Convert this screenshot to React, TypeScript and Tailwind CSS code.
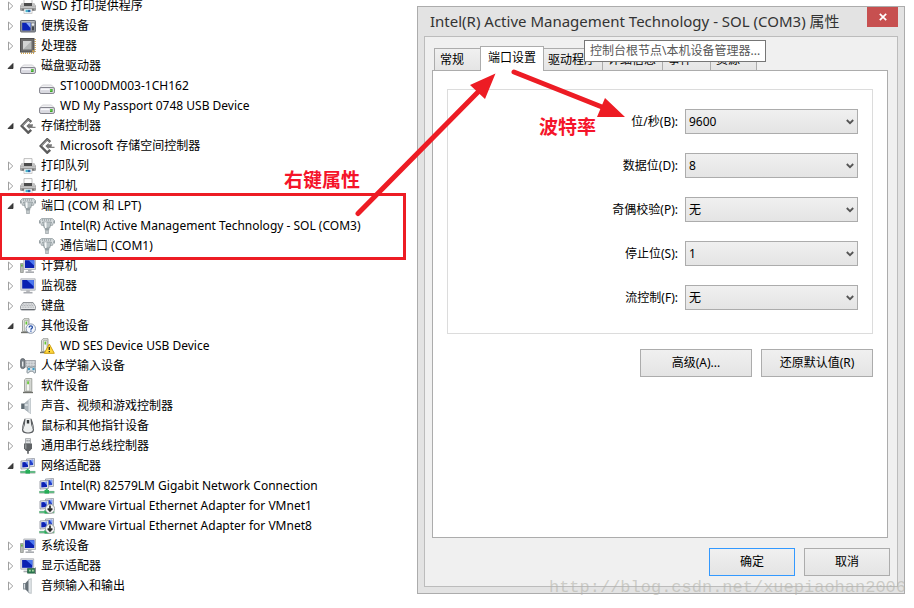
import { ReactNode } from "react";

type IconName =
  | "printer" | "portable" | "cpu" | "disk" | "storage" | "port" | "computer" | "monitor"
  | "keyboard" | "unknown" | "warning" | "hid" | "software" | "sound" | "mouse" | "usb"
  | "network" | "networkDown" | "display" | "speaker";

interface DeviceNode {
  label: string;
  icon: IconName;
  children?: DeviceNode[];
}

interface PortSetting {
  id: string;
  label: string;
  options: string[];
}

const devices: DeviceNode[] = [
  { label: "WSD 打印提供程序", icon: "printer" },
  { label: "便携设备", icon: "portable" },
  { label: "处理器", icon: "cpu" },
  {
    label: "磁盘驱动器", icon: "disk", children: [
      { label: "ST1000DM003-1CH162", icon: "disk" },
      { label: "WD My Passport 0748 USB Device", icon: "disk" },
    ],
  },
  { label: "存储控制器", icon: "storage", children: [{ label: "Microsoft 存储空间控制器", icon: "storage" }] },
  { label: "打印队列", icon: "printer" },
  { label: "打印机", icon: "printer" },
  {
    label: "端口 (COM 和 LPT)", icon: "port", children: [
      { label: "Intel(R) Active Management Technology - SOL (COM3)", icon: "port" },
      { label: "通信端口 (COM1)", icon: "port" },
    ],
  },
  { label: "计算机", icon: "computer" },
  { label: "监视器", icon: "monitor" },
  { label: "键盘", icon: "keyboard" },
  { label: "其他设备", icon: "unknown", children: [{ label: "WD SES Device USB Device", icon: "warning" }] },
  { label: "人体学输入设备", icon: "hid" },
  { label: "软件设备", icon: "software" },
  { label: "声音、视频和游戏控制器", icon: "sound" },
  { label: "鼠标和其他指针设备", icon: "mouse" },
  { label: "通用串行总线控制器", icon: "usb" },
  {
    label: "网络适配器", icon: "network", children: [
      { label: "Intel(R) 82579LM Gigabit Network Connection", icon: "network" },
      { label: "VMware Virtual Ethernet Adapter for VMnet1", icon: "networkDown" },
      { label: "VMware Virtual Ethernet Adapter for VMnet8", icon: "networkDown" },
    ],
  },
  { label: "系统设备", icon: "computer" },
  { label: "显示适配器", icon: "display" },
  { label: "音频输入和输出", icon: "speaker" },
];

const settings: PortSetting[] = [
  { id: "baud", label: "位/秒(B):", options: ["9600"] },
  { id: "data", label: "数据位(D):", options: ["8"] },
  { id: "parity", label: "奇偶校验(P):", options: ["无"] },
  { id: "stop", label: "停止位(S):", options: ["1"] },
  { id: "flow", label: "流控制(F):", options: ["无"] },
];

const tower = (
  <>
    <path d="M2.5 2.5 4 .7h5v12.8H2.500z" fill="#e0e2de" stroke="#8d908a" strokeWidth=".8" />
    <path d="M4.500 2.500h3.500v10.500H4.500z" fill="#f5f7f3" stroke="#a4a7a0" strokeWidth=".7" />
    <path d="M5.500 3.500h1.600v3H5.500z" fill="#63c531" />
    <path d="M1 14.500h9" stroke="#6f716c" strokeWidth="1.400" />
  </>
);

const networkBase = (
  <>
    <path d="M6.500 1 14.500.4v8L6.500 9z" fill="#e3e5ea" stroke="#959aa5" strokeWidth=".8" />
    <path d="M8 2.200 13.200 1.800v5.200L8 7.400z" fill="#2240cc" />
    <path d="M10.500 2 13.200 1.800v4z" fill="#7fa0f5" />
    <path d="M1 3 9.300 2.300v8.200L1 11z" fill="#eceef2" stroke="#8c9099" strokeWidth=".8" />
    <path d="M2.300 4.200 8 3.700v5.300l-5.700.4z" fill="#0d22b4" />
    <path d="M5 4 8 3.700v3.500z" fill="#6f95f4" />
    <path d="M.3 14.200h15" stroke="#9ba69f" strokeWidth="2.600" />
    <path d="M.3 14h15" stroke="#4cc27a" strokeWidth="1.400" />
    <path d="M5.500 12h4.500v3.600H5.500z" fill="#25ad57" />
    <path d="M6.800 10.800h1.900v2H6.800z" fill="#3db56a" />
  </>
);

const icons: Record<IconName, ReactNode> = {
  printer: (
    <>
      <path d="M4 .6h8V6H4z" fill="#fdfdfd" stroke="#b0b0b0" strokeWidth=".8" />
      <path d="M2 5h12l2 3v3.500q0 1.500-1.500 1.500h-13Q0 13 0 11.500V8z" fill="#9c9c9c" />
      <path d="M2 5h2v3H.4zM12 5h2l1.600 3H12z" fill="#c4c4c4" />
      <path d="M4 5h8v3H4z" fill="#4c4c4c" />
      <path d="M.4 8.300h15.200v1.700H.4z" fill="#c6c6c6" />
      <path d="M2.500 10.800h11v1.700h-11z" fill="#555" />
      <path d="M4 11h8v4.600H4z" fill="#fff" stroke="#b4b4b4" strokeWidth=".7" />
      <path d="M5.500 11.800H8v2.400H5.500z" fill="#4bb0c8" />
      <path d="M8 11.800h2.500v2.400H8z" fill="#2b6aab" />
    </>
  ),
  portable: (
    <>
      <rect x=".5" y="2.500" width="15" height="11.500" rx=".8" fill="#8b9097" stroke="#666b73" />
      <path d="M1.500 3.400h13v.8h-13z" fill="#d3d6da" />
      <path d="M2.200 4.800h8.300v7.700H2.200z" fill="#0b24b9" />
      <path d="M6 4.800h4.500v5.200z" fill="#8aaaf7" />
      <circle cx="13" cy="6.500" r="1.200" fill="#eceeef" />
      <path d="M12.200 8.500h1.600v3.700h-1.600z" fill="#30343b" />
    </>
  ),
  cpu: (
    <>
      <path d="M1 15.200h14M15.200 1v14" stroke="#d6a84e" strokeWidth="1.400" strokeDasharray="1 1" />
      <path d="M0 0h14.500v14.500H0z" fill="#505050" />
      <path d="M1 1h12.500v12.500H1z" fill="#6b6b6b" />
      <path d="M3 3h8.500v8.500H3z" fill="#b3b6b5" />
      <path d="M3 3h8.500L3 11.500z" fill="#d2d4d3" />
      <path d="M12.200 12.200H14V14h-1.800z" fill="#d3a34a" />
    </>
  ),
  disk: (
    <>
      <path d="M3.500 7h9l3 3H.5z" fill="#f2f2f4" stroke="#c8c8cd" strokeWidth=".8" />
      <rect x=".5" y="9.500" width="15" height="6" rx="1.600" fill="#d9d9e0" stroke="#85858e" />
      <path d="M2 11.300h8.500" stroke="#f7f7fa" strokeWidth="1.600" />
      <path d="M11 11h2.600v3H11z" fill="#3fa62c" />
      <path d="M11.400 11.300h1v1.700h-1z" fill="#8bdf70" />
    </>
  ),
  storage: (
    <>
      <path d="M11.300 4 8.200 1.200 1.600 8l6.600 6.700 3-2.900" fill="none" stroke="#5c5c5c" strokeWidth="2.400" />
      <path d="M10.600 3.800 8.200 1.600 2.200 7.800" fill="none" stroke="#999" strokeWidth="1" />
      <path d="M6.400 8 9.600 4.900v2h3V9.200h-3v2z" fill="#6e6e6e" />
      <path d="M8 6.800h5M8 9.300h7.500" stroke="#808080" strokeWidth="1.300" />
    </>
  ),
  port: (
    <>
      <path d="M.8 2.300 2.500.6h11l1.700 1.700-1.700 5h-11z" fill="#dce1e3" stroke="#8b9599" strokeWidth=".8" />
      <path d="M2.800 2h10.400" stroke="#748086" strokeWidth="1" strokeDasharray="1.200 .8" />
      <path d="M.5 2.500v3M15.500 2.500v3" stroke="#98a1a5" strokeWidth="1" />
      <path d="M3.500 4h9l-1.800 6H5.300z" fill="#b9c2c5" stroke="#879094" strokeWidth=".7" />
      <path d="M5.500 4.300h2V10h-1.500z" fill="#f5f7f8" />
      <path d="M5.800 10h4.400v2.300H5.800z" fill="#98a2a6" />
      <path d="M6.600 12.200h2.800v3.500H6.600z" fill="#c7ced0" stroke="#879094" strokeWidth=".6" />
    </>
  ),
  computer: (
    <>
      <path d="M.5 5.500h2.800v9H.5z" fill="#b8bcb7" stroke="#858a85" strokeWidth=".7" />
      <path d="M1.200 6.500h1.400v2H1.200z" fill="#51b92d" />
      <path d="M3.800 1h11.700v10.500H3.800z" fill="#dcdee2" stroke="#a7abb1" strokeWidth=".8" />
      <path d="M5 2.200h9.300v7.800H5z" fill="#0a21b2" />
      <path d="M8.500 2.200h5.800v5.600z" fill="#4c78ef" />
      <path d="M8 11.500h3.500v2H8z" fill="#b0b3b7" />
      <path d="M5.500 14.200H14" stroke="#a8abb0" strokeWidth="1.600" />
    </>
  ),
  monitor: (
    <>
      <path d="M.8.800h14.400v11.400H.8z" fill="#dcdee2" stroke="#a7abb1" strokeWidth=".8" />
      <path d="M2.200 2h11.600v8.600H2.200z" fill="#0a21b2" />
      <path d="M6.800 2h7v6.400z" fill="#4c78ef" />
      <path d="M6.200 12.300h3.600v1.600H6.200z" fill="#b0b3b7" />
      <path d="M3.500 14.700h9" stroke="#a8abb0" strokeWidth="1.600" />
    </>
  ),
  keyboard: (
    <>
      <path d="M3 4.500h10l2.600 4.200v1.800q0 1.500-1.500 1.500H1.900Q.4 12 .4 10.500V8.700z" fill="#e3e5e7" stroke="#868a8f" strokeWidth=".9" />
      <path d="M3 6h10M2.300 7.600h11.400M1.700 9.200h12.600" stroke="#979ba0" strokeWidth=".8" strokeDasharray="1 .6" />
      <path d="M1.200 11.500h13.600" stroke="#63676d" strokeWidth="1" />
    </>
  ),
  unknown: (
    <>
      {tower}
      <circle cx="10.800" cy="10.600" r="4.700" fill="#f4f7fc" stroke="#8a98b0" />
      <path d="M9.200 9.500c0-2.300 3.400-2.100 3.200-.1-.1 1-1.500 1.200-1.500 2.300M10.900 12.600v1.100" fill="none" stroke="#254ea8" strokeWidth="1.300" />
    </>
  ),
  warning: (
    <>
      {tower}
      <path d="m10.300 6 5 9.300h-10z" fill="#ffd83f" stroke="#cfa012" strokeLinejoin="round" />
      <path d="M10.300 8.900v3M10.300 13v1.300" stroke="#2f2a16" strokeWidth="1.300" />
    </>
  ),
  hid: (
    <>
      <path d="M5 2.500h10.600V9H5z" fill="#dfe2e5" stroke="#8f949a" strokeWidth=".8" />
      <path d="M6 4h9M6 5.600h9M6 7.200h9" stroke="#8f949a" strokeWidth=".7" strokeDasharray="1 .6" />
      <rect x=".6" y=".6" width="4.200" height="10" rx="2" fill="#7a8188" stroke="#555b61" strokeWidth=".8" />
      <path d="M2 3.500h1.400v5H2z" fill="#e6e9eb" />
      <path d="M7.500 9.200c1-.9 1.800-.4 2.500 0h2.300c.8-.4 2-.8 2.800.1l.6 5.200c-1.400 1.500-2.200-.2-2.800-1.300h-3c-.6 1.100-1.800 2.800-3 1.300z" fill="#d9e1e6" stroke="#6c7880" strokeWidth=".8" />
      <circle cx="9" cy="11" r="1.200" fill="#3d9bc5" />
      <circle cx="13.500" cy="11" r="1.200" fill="#3d9bc5" />
    </>
  ),
  software: (
    <>
      <path d="M4.500 1.800 5.800.6h6v12.900H4.500z" fill="#e0e2de" stroke="#8d908a" strokeWidth=".8" />
      <path d="M6.300 2.500h3.500V13H6.300z" fill="#f5f7f3" stroke="#a4a7a0" strokeWidth=".7" />
      <path d="M7.200 3.200h1.700v3H7.200z" fill="#63c531" />
      <path d="M3 14.500h10" stroke="#6f716c" strokeWidth="1.400" />
    </>
  ),
  sound: (
    <>
      <path d="M1.200 5.500H5v5.500H1.200z" fill="#5f6a72" />
      <path d="M4.500 5.500 10.500.5v15L4.500 11z" fill="#b0b9bf" stroke="#929ca3" strokeWidth=".6" />
      <path d="M8.500 2.200 10.500.5v15l-2-1.700z" fill="#dce1e5" />
      <path d="M4.800 6.300h3v1.400h-3z" fill="#e9ecef" />
    </>
  ),
  mouse: (
    <>
      <path d="M4.500.8h7C12.400 3 14 8.500 14 11.500c0 3-2.200 4-6 4s-6-1-6-4C2 8.500 3.600 3 4.500.8z" fill="#5a5d60" />
      <path d="M5.500 1h5l.7 6 1.700 4.600c-.5 2.300-2.200 3-4.900 3s-4.400-.7-4.900-3L4.800 7z" fill="#eef0f0" />
      <path d="M6.800 2h2.400v3.500H6.800z" fill="#35383b" />
      <path d="M3.600 6.500 3 11M12.400 6.500l.6 4.500" stroke="#9da1a4" />
    </>
  ),
  usb: (
    <>
      <path d="M5.500.6h5v5h-5z" fill="#e1e3e5" stroke="#999da0" strokeWidth=".8" />
      <path d="M6.600 2h1v1.500h-1zM8.600 2h1v1.500h-1z" fill="#7b7f82" />
      <path d="M4 5.500h8v5L9.800 13H6.200L4 10.500z" fill="#616467" />
      <path d="M5 6.300h1.500v4.500H5z" fill="#8f9396" />
      <path d="M7.200 12.500h1.600v3.200H7.200z" fill="#55585b" />
    </>
  ),
  network: networkBase,
  networkDown: (
    <>
      {networkBase}
      <circle cx="11" cy="10.800" r="4.600" fill="#f1f3f3" stroke="#9a9e9e" strokeWidth=".9" />
      <path d="M11 7.600v5M8.700 10.500l2.300 2.400 2.300-2.400" fill="none" stroke="#2b2b2b" strokeWidth="1.700" />
    </>
  ),
  display: (
    <>
      <path d="M.8.800h12.900v10.400H.8z" fill="#dcdee2" stroke="#a7abb1" strokeWidth=".8" />
      <path d="M2.100 2h10.300v7.800H2.100z" fill="#0a21b2" />
      <path d="M6 2h6.400v5.600z" fill="#4c78ef" />
      <path d="M3.500 13.500h5" stroke="#a8abb0" strokeWidth="1.600" />
      <path d="M7.500 10.500h7.300v4.700H7.500z" fill="#2c7a50" stroke="#1d5438" strokeWidth=".6" />
      <path d="M9 11.800h1.800v1.800H9zM12 11.800h1.800v1.800H12z" fill="#a5d29b" />
      <path d="M15.500 9.500V16" stroke="#84888c" />
    </>
  ),
  speaker: (
    <>
      <path d="M3 5h3v6.500H3z" fill="#8a949b" />
      <path d="M5.500 5 9.500.8v14.700l-4-4z" fill="#656f76" />
      <path d="M8.500 1.800 11.300.5v15l-2.800-1z" fill="#e1e5e8" stroke="#a5adb2" strokeWidth=".6" />
      <path d="M4 6h1v4.500H4z" fill="#d7dce0" />
    </>
  ),
};

const DeviceIcon = ({ name }: { name: IconName }): ReactNode => (
  <svg viewBox="0 0 16 16" className="h-4 w-4 shrink-0" aria-hidden="true">{icons[name]}</svg>
);

const Expander = ({ open }: { open: boolean }): ReactNode => (
  <svg viewBox="0 0 8 10" className="h-2.5 w-2 shrink-0" aria-hidden="true">
    {open
      ? <path d="M6 2.500v5H1z" fill="#404040" stroke="#262626" strokeWidth=".8" />
      : <path d="M1.500 1v8L5.800 5z" fill="#fff" stroke="#a0a0a0" />}
  </svg>
);

const DeviceTree = (): ReactNode => (
  <ul className="-mt-1 min-w-0 text-xs whitespace-nowrap">
    {devices.map(node => (
      <li key={node.label}>
        <div className="flex h-5 items-center pl-[7px]">
          <Expander open={!!node.children} />
          <span className="flex items-center gap-[5px] pl-[5px]">
            <DeviceIcon name={node.icon} />
            <span>{node.label}</span>
          </span>
        </div>
        {node.children && (
          <ul>
            {node.children.map(child => (
              <li key={child.label} className="flex h-5 items-center gap-[5px] pl-[39px]">
                <DeviceIcon name={child.icon} />
                <span>{child.label}</span>
              </li>
            ))}
          </ul>
        )}
      </li>
    ))}
  </ul>
);

const inactiveTab = "h-[22px] border border-b-0 border-[#acacac] bg-linear-to-b from-[#f0f0f0] to-[#e5e5e5] text-left";

const Tabs = (): ReactNode => (
  <div role="tablist" className="flex items-end pl-0.5 whitespace-nowrap">
    <button type="button" role="tab" aria-selected="false" className={`${inactiveTab} w-[46px] border-r-0 pl-[5px]`}>常规</button>
    <button type="button" role="tab" aria-selected="true" className="relative -mb-px h-[25px] w-16 border border-b-0 border-[#acacac] bg-white pb-0.5 text-center">端口设置</button>
    <button type="button" role="tab" aria-selected="false" className={`${inactiveTab} w-[59px] border-l-0 pl-1`}>驱动程序</button>
    <button type="button" role="tab" aria-selected="false" className={`${inactiveTab} w-[60px] border-l-0 pl-[5px]`}>详细信息</button>
    <button type="button" role="tab" aria-selected="false" className={`${inactiveTab} w-12 border-l-0 pl-[5px]`}>事件</button>
    <button type="button" role="tab" aria-selected="false" className={`${inactiveTab} w-[46px] border-l-0 pl-[5px]`}>资源</button>
  </div>
);

const PushButton = ({ children, className }: { children: ReactNode, className: string }): ReactNode => (
  <button type="button" className={`h-7 border bg-linear-to-b from-[#f0f0f0] to-[#e4e4e4] text-center ${className}`}>
    {children}
  </button>
);

const SettingRow = ({ setting }: { setting: PortSetting }): ReactNode => (
  <div className="flex items-center justify-end gap-[7px]">
    <label htmlFor={setting.id}>{setting.label}</label>
    <div className="relative w-[173px]">
      <select
        id={setting.id}
        className="block h-[25px] w-full appearance-none border border-[#acacac] bg-linear-to-b from-[#f0f0f0] to-[#e4e4e4] pl-[3px]">
        {setting.options.map(option => <option key={option}>{option}</option>)}
      </select>
      <svg viewBox="0 0 8 6" className="pointer-events-none absolute top-2.5 right-1 h-1.5 w-2" aria-hidden="true">
        <path d="m.8 1 3.200 3.200L7.200 1" fill="none" stroke="#555" strokeWidth="1.800" />
      </svg>
    </div>
  </div>
);

const PropertiesDialog = (): ReactNode => (
  <section className="relative mt-1.5 mb-3.5 flex min-w-0 flex-col border border-[#acacac] bg-[#e3e3e3] px-1.5 pb-1.5 text-xs">
    <header className="flex h-[29px] shrink-0 items-start justify-between pl-1.5">
      <h1 className="text-[15px] leading-[29px] whitespace-nowrap text-[#333]">
        Intel(R) Active Management Technology - SOL (COM3) 属性
      </h1>
      <button type="button" aria-label="关闭" className="flex h-5 w-[31px] shrink-0 items-center justify-center bg-[#c75050]">
        <svg viewBox="0 0 8 8" className="h-2 w-2" aria-hidden="true">
          <path d="m.8.8 6.400 6.400M7.200.8.8 7.200" stroke="#fff" strokeWidth="1.700" />
        </svg>
      </button>
    </header>
    <div className="flex flex-1 flex-col border border-[#bcbcbc] bg-[#f0f0f0] px-[7px] pt-[9px] pb-2.5">
      <Tabs />
      <div role="tabpanel" className="mr-0.5 flex-1 border border-[#acacac] bg-white px-3.5 pt-[18px]">
        <form className="flex flex-col gap-[19px] border border-[#dcdcdc] pt-[19px] pr-3.5 pb-[23px]">
          {settings.map(setting => <SettingRow key={setting.id} setting={setting} />)}
        </form>
        <div className="mt-[15px] flex justify-end gap-[9px]">
          <PushButton className="w-28 border-[#acacac]">高级(A)...</PushButton>
          <PushButton className="w-28 border-[#acacac]">还原默认值(R)</PushButton>
        </div>
      </div>
      <div className="mt-2.5 flex justify-end gap-[9px]">
        <PushButton className="w-[86px] border-[#3399ff]">确定</PushButton>
        <PushButton className="w-[86px] border-[#acacac]">取消</PushButton>
      </div>
    </div>
    <div role="tooltip" className="absolute top-[33px] left-[166px] flex h-[22px] items-center border border-[#767676] bg-white px-[5px] whitespace-nowrap text-[#575757]">
      控制台根节点\本机设备管理器...
    </div>
  </section>
);

// Red markup drawn over both windows
const Annotations = (): ReactNode => (
  <div className="pointer-events-none absolute inset-0 text-[19px] leading-[19px] font-bold text-[#f5142a]">
    <div className="absolute top-[193px] -left-px h-[67px] w-[407px] border-3 border-[#ed1c24]" />
    <svg viewBox="0 0 914 608" className="absolute top-0 left-0 h-[608px] w-[914px]" aria-hidden="true">
      <g stroke="#ed1c24" strokeWidth="5" strokeLinecap="round" fill="#ed1c24">
        <path d="M358 213.500 480 90M514 72l88 35" />
        <path d="M495.500 73.500 470 85l15 14zM625 117l-20-19-8 19z" stroke="none" />
      </g>
    </svg>
    <span className="absolute top-[171px] left-[284px]">右键属性</span>
    <span className="absolute top-[118px] left-[539px]">波特率</span>
  </div>
);

export default function App() {
  return (
    <main className="relative grid min-h-screen grid-cols-[417fr_488fr] overflow-hidden bg-white pr-[9px] font-['Noto_Sans','Noto_Sans_CJK_SC',sans-serif] text-black">
      <DeviceTree />
      <PropertiesDialog />
      <Annotations />
      <span className="absolute right-2 bottom-2.5 font-['Liberation_Mono',monospace] text-[17px] leading-5 text-[#b4b4ac]/60">
        http://blog.csdn.net/xuepiaohan2006
      </span>
    </main>
  );
}
